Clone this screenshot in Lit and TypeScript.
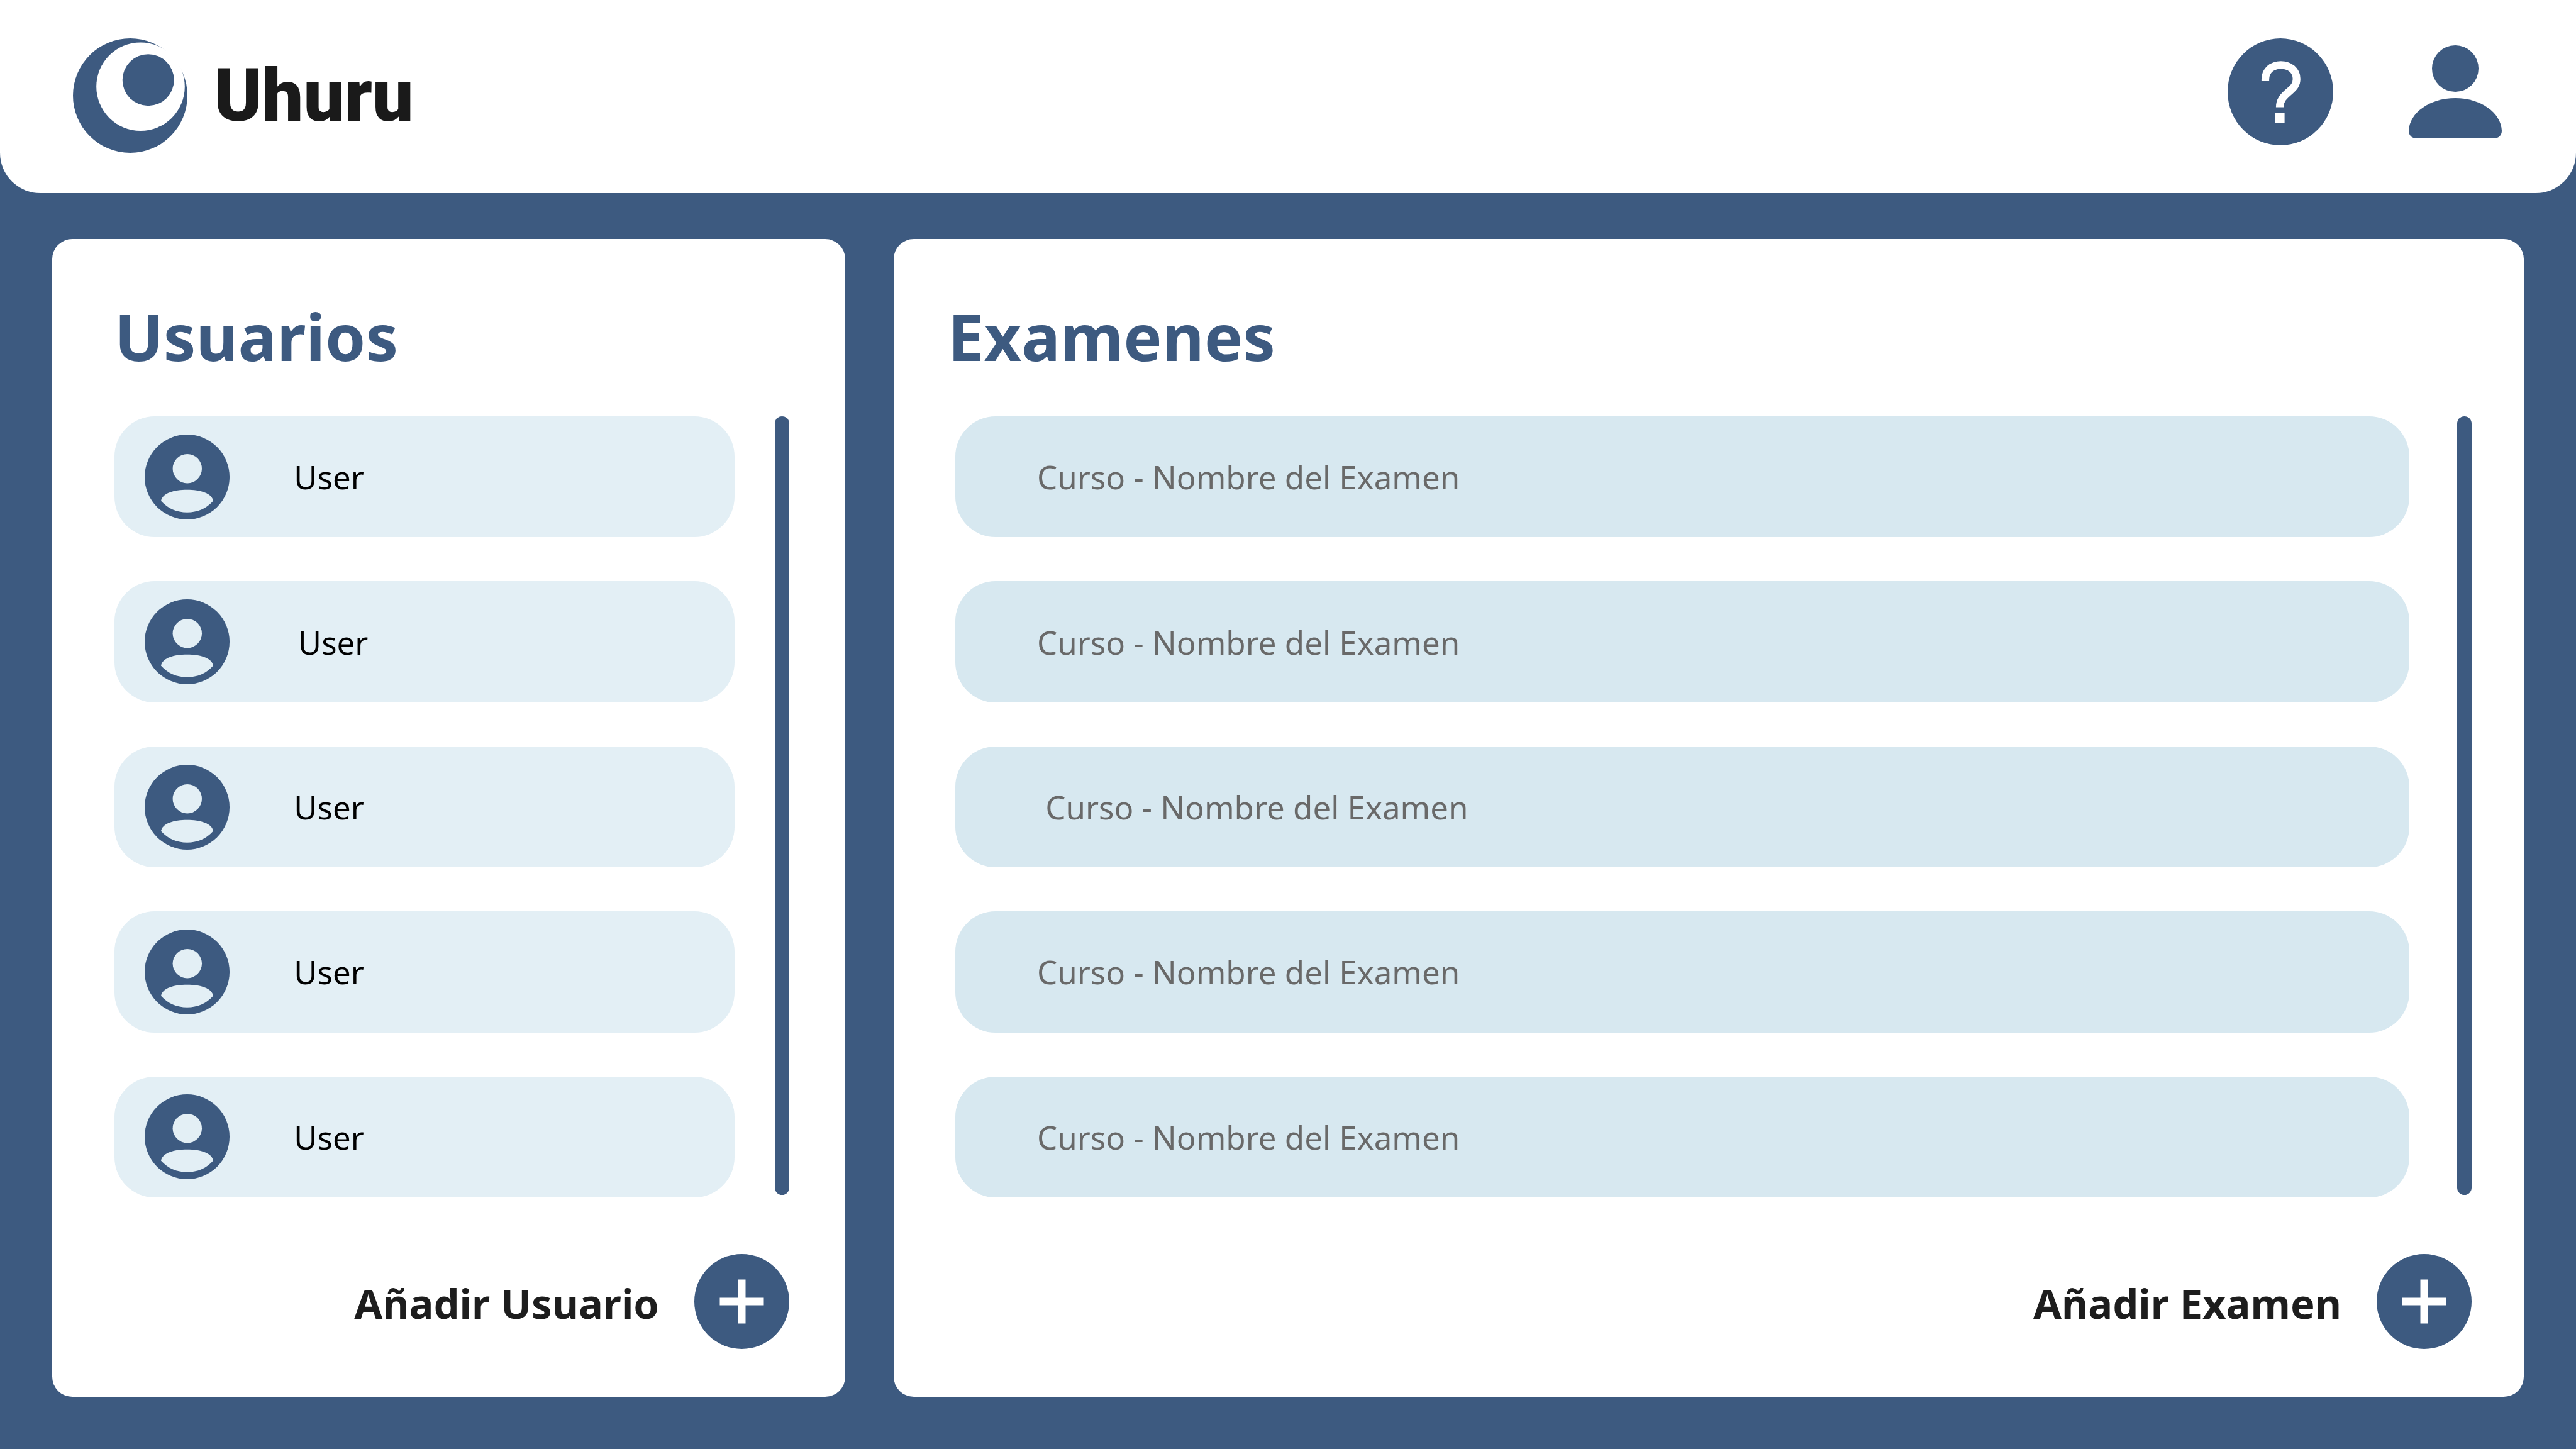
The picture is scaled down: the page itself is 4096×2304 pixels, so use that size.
import { LitElement, html, css } from "lit";
import { customElement, property } from "lit/decorators.js";

interface Entry {
  name: string;
}

const USERS: Entry[] = [
  { name: "User" },
  { name: " User" },
  { name: "User" },
  { name: "User" },
  { name: "User" },
];

const EXAMS: Entry[] = [
  { name: "Curso - Nombre del Examen" },
  { name: "Curso - Nombre del Examen" },
  { name: " Curso - Nombre del Examen" },
  { name: "Curso - Nombre del Examen" },
  { name: "Curso - Nombre del Examen" },
];

/** Top bar: brand on the left, help and account buttons on the right. */
@customElement("app-header")
export class AppHeader extends LitElement {
  static styles = css`
    :host {
      display: block;
    }
    .bar {
      display: flex;
      justify-content: space-between;
      align-items: flex-start;
      padding: 61px 118px 64px 116px;
      background: #fff;
      border-radius: 0 0 64px 64px;
    }
    .brand {
      display: flex;
      align-items: center;
      gap: 42px;
      color: #1a1a1a;
      font-family: Roboto, sans-serif;
      font-weight: 900;
      font-size: 116px;
      line-height: 182px;
      text-decoration: none;
    }
    .actions {
      display: flex;
      align-items: center;
      gap: 120px;
    }
    .action {
      display: block;
      padding: 0;
      border: 0;
      background: none;
      color: #3d5a80;
      cursor: pointer;
    }
    svg {
      display: block;
    }
  `;

  render() {
    return html`
      <header class="bar">
        <a class="brand" href="#">
          <svg width="182" height="182" viewBox="0 0 182 182" aria-hidden="true">
            <circle cx="91" cy="91" r="91" fill="#3d5a80" />
            <circle cx="107.5" cy="76.7" r="70.3" fill="#fff" />
            <circle cx="119.7" cy="66.2" r="41" fill="#3d5a80" />
          </svg>
          <span>Uhuru</span>
        </a>
        <nav class="actions">
          <button class="action" aria-label="Ayuda">
            <svg width="168" height="170" viewBox="0 0 168 170">
              <ellipse cx="84" cy="85" rx="84" ry="85" fill="currentColor" />
              <path
                d="M60 68V65C60 51 71 42.3 84.7 42.3C99 42.3 109.7 51 109.7 64.5C109.7 73.5 105.5 78 98.5 84C88 93 83 98.500 83 109.500"
                fill="none"
                stroke="#fff"
                stroke-width="12.2"
              />
              <rect x="75.400" y="118.500" width="15.200" height="16" fill="#fff" />
            </svg>
          </button>
          <button class="action" aria-label="Cuenta">
            <svg width="148" height="148" viewBox="0 0 148 148">
              <circle cx="74" cy="37" r="37" fill="currentColor" />
              <path
                d="M12 148C5 148 0 143 0 136C1 107 34 84 74 84C114 84 147 107 148 136C148 143 143 148 136 148Z"
                fill="currentColor"
              />
            </svg>
          </button>
        </nav>
      </header>
    `;
  }
}

/** White panel with a title, a list of rows beside a scroll track, and an add button. */
@customElement("list-panel")
export class ListPanel extends LitElement {
  @property() heading = "";
  @property() addLabel = "";
  @property() kind: "users" | "exams" = "users";
  @property({ attribute: false }) entries: Entry[] = [];

  static styles = css`
    :host {
      display: flex;
      font-family: "Noto Sans", sans-serif;
    }
    .panel {
      flex: 1;
      display: flex;
      flex-direction: column;
      box-sizing: border-box;
      background: #fff;
      border-radius: 32px;
    }
    .users {
      padding: 94px 89px 76px 99px;
    }
    .exams {
      padding: 94px 83px 76px 86px;
    }
    .title {
      margin: 0 0 68px;
      color: #3d5a80;
      font-weight: 700;
      font-size: 103px;
      line-height: 120px;
    }
    .body {
      flex: 1;
      display: flex;
      gap: 64px;
    }
    .exams .body {
      gap: 76px;
      padding-left: 12px;
    }
    .rows {
      flex: 1;
      display: flex;
      flex-direction: column;
      gap: 70px;
      margin: 0;
      padding: 0;
      list-style: none;
    }
    .row {
      flex: 1;
      display: flex;
      align-items: center;
      gap: 48px;
      border-radius: 64px;
      font-size: 51px;
      line-height: 72px;
      white-space: pre;
    }
    .users .row {
      padding: 28px 48px;
      background: #e3eff5;
      color: #000;
    }
    .exams .row {
      padding: 28px 130px;
      background: #d7e8f0;
      color: #696969;
    }
    .users .name {
      width: 220px;
      text-align: center;
    }
    .track {
      width: 23px;
      margin-bottom: 4px;
      border-radius: 12px;
      background: #3d5a80;
    }
    .add {
      align-self: flex-end;
      display: flex;
      align-items: center;
      gap: 56px;
      margin-top: 90px;
      padding: 0;
      border: 0;
      background: none;
      color: #1d1d1d;
      font-family: inherit;
      font-weight: 700;
      font-size: 65px;
      line-height: 88px;
      cursor: pointer;
    }
    .label {
      padding-top: 4px;
    }
    svg {
      display: block;
    }
  `;

  private avatar() {
    return html`
      <svg width="135" height="135" viewBox="0 0 135 135" aria-hidden="true">
        <circle cx="67.500" cy="67.500" r="67.500" fill="#3d5a80" />
        <circle cx="67.800" cy="54.200" r="23.200" fill="#e3eff5" />
        <path
          d="M26 105.600C28 93 47 87.800 67.500 87.800C88 87.800 107 93 109 105.600C98 118 84 123.800 67.500 123.800C51 123.800 37 118 26 105.600Z"
          fill="#e3eff5"
        />
      </svg>
    `;
  }

  render() {
    return html`
      <section class="panel ${this.kind}">
        <h2 class="title">${this.heading}</h2>
        <div class="body">
          <ul class="rows">
            ${this.entries.map(
              (entry) => html`<li class="row">${this.kind === "users" ? this.avatar() : null}<span class="name">${entry.name}</span></li>`
            )}
          </ul>
          <div class="track"></div>
        </div>
        <button class="add">
          <span class="label">${this.addLabel}</span>
          <svg width="151" height="151" viewBox="0 0 151 151" aria-hidden="true">
            <circle cx="75.500" cy="75.500" r="75.500" fill="#3d5a80" />
            <path d="M75.500 40.500V110.500M40.500 75.500H110.500" stroke="#fff" stroke-width="12" />
          </svg>
        </button>
      </section>
    `;
  }
}

@customElement("app-root")
export class AppRoot extends LitElement {
  static styles = css`
    :host {
      display: flex;
      flex-direction: column;
      min-height: 100vh;
      background: #3d5a80;
    }
    .content {
      flex: 1;
      display: grid;
      grid-template-columns: 1261fr 2592fr;
      gap: 77px;
      padding: 73px 83px 83px;
    }
  `;

  render() {
    return html`
      <app-header></app-header>
      <main class="content">
        <list-panel kind="users" heading="Usuarios" addLabel="Añadir Usuario" .entries=${USERS}></list-panel>
        <list-panel kind="exams" heading="Examenes" addLabel="Añadir Examen" .entries=${EXAMS}></list-panel>
      </main>
    `;
  }
}
